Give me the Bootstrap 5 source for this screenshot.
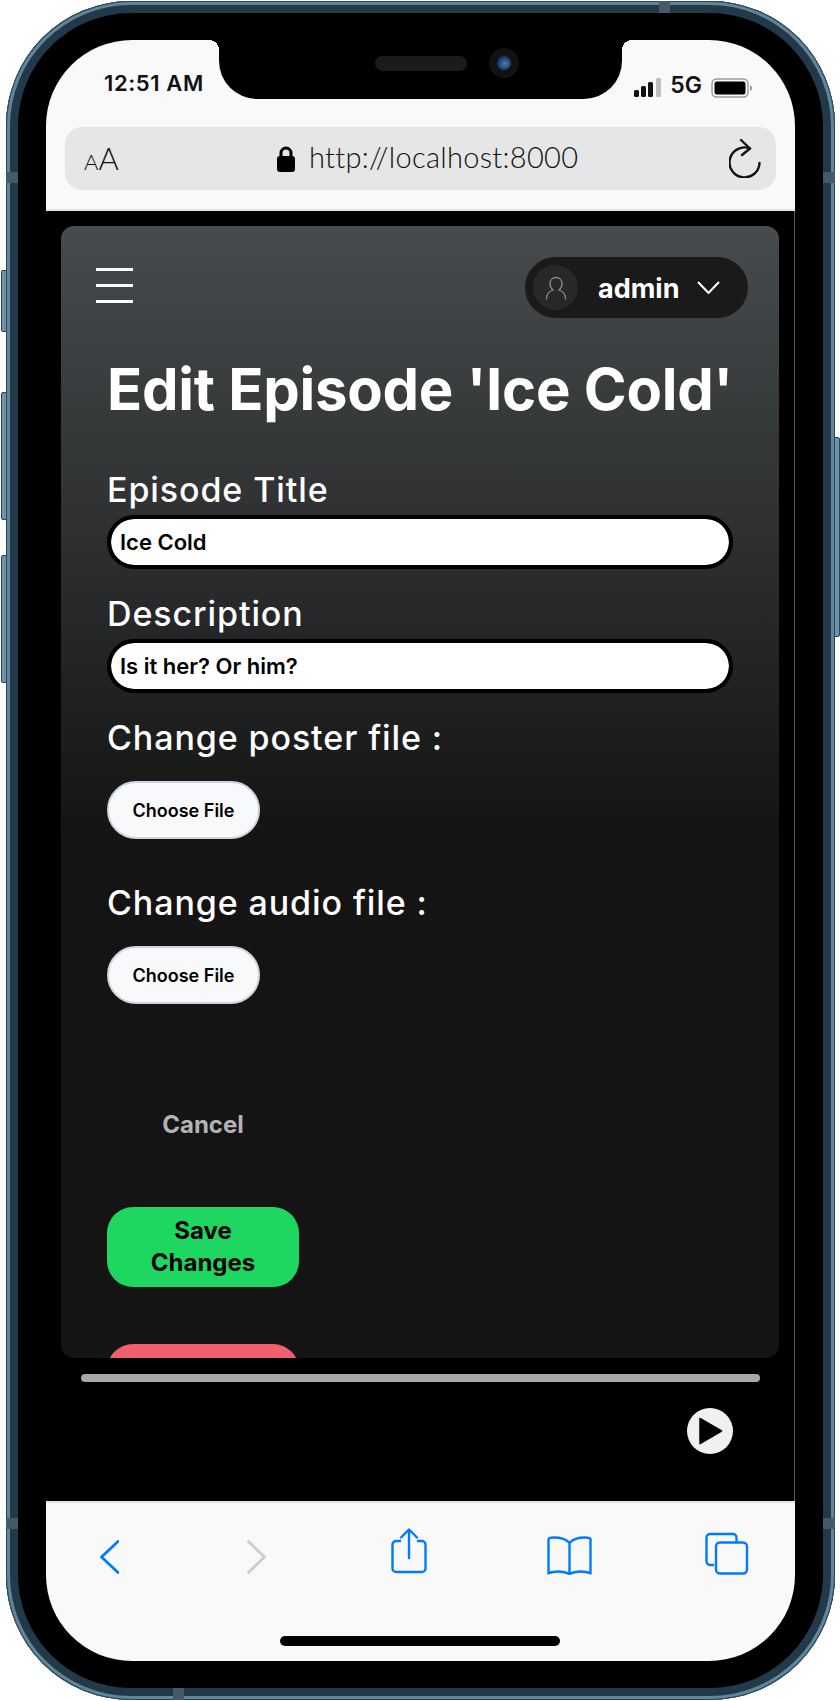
<!DOCTYPE html>
<html lang="en">
<head>
  <meta charset="UTF-8" />
  <meta name="viewport" content="width=device-width, initial-scale=1.0"/>
  <title>Edit Episode</title>
  <link href="https://cdn.jsdelivr.net/npm/bootstrap@5.3.0/dist/css/bootstrap.min.css" rel="stylesheet"/>
  <style>
    body { background: #fff; margin: 0; font-family: "Inter", "Liberation Sans", sans-serif; }
    .device { position: relative; width: 829px; height: 1699px; margin: 1px 0 0 6px; padding: 39px 40px; background: #000; border-radius: 125px;
      box-shadow: inset 0 0 0 1px #2c4557, inset 0 0 0 4px #628599, inset 0 0 0 12px #22394a; }
    .side-btn { position: absolute; width: 6px; background: #6f93aa; border: 1px solid #2c4557; }
    .side-left { left: -5px; border-radius: 2px 0 0 2px; }
    .side-right { right: -5px; border-radius: 0 2px 2px 0; }
    .band { position: absolute; background: #46596a; }
    .screen { position: relative; height: 1621px; border-radius: 86px; overflow: hidden; background: #000; }
    .safari-top { height: 171px; background: #f9f9f9; border-bottom: 2px solid #e6e6e6; padding: 0 19px; }
    .status-row { height: 87px; padding: 25px 23px 0 39px; }
    .clock { font-size: 22px; font-weight: 600; color: #111; line-height: 36px; letter-spacing: .6px; }
    .status-right { margin-top: 7px; }
    .signal-text { font-size: 23px; font-weight: 600; color: #111; line-height: 36px; margin: -5px 9px 0 8px; }
    .notch { position: absolute; top: 0; left: 173px; width: 403px; height: 59px; background: #000; border-radius: 0 0 38px 38px; }
    .notch::before, .notch::after { content: ""; position: absolute; top: 0; width: 10px; height: 10px; }
    .notch::before { left: -10px; background: radial-gradient(circle at 0 100%, transparent 10px, #000 10px); }
    .notch::after { right: -10px; background: radial-gradient(circle at 100% 100%, transparent 10px, #000 10px); }
    .speaker { position: absolute; left: 156px; top: 16px; width: 92px; height: 15px; border-radius: 8px; background: #1b1b1b; }
    .camera { position: absolute; left: 270px; top: 8px; width: 30px; height: 30px; border-radius: 50%; background: #121214; }
    .camera::after { content: ""; position: absolute; left: 8px; top: 8px; width: 14px; height: 14px; border-radius: 50%; background: radial-gradient(circle at 55% 55%, #3f7fb5, #1d2c5c 70%); }
    .url-bar { height: 63px; background: #e6e6e6; border-radius: 17px; padding: 0 15px 0 19px; color: #111; }
    .aa-text { font-family: "Lato", sans-serif; font-weight: 300; line-height: 1; width: 193px; }
    .aa-small { font-size: 22px; }
    .aa-big { font-size: 31px; }
    .url-text { font-family: "Lato", sans-serif; font-size: 29px; font-weight: 300; margin: -4px 0 0 14px; letter-spacing: .3px; }
    .page-area { height: 1290px; padding: 15px 15px 0; border-right: 1px solid #555; }
    .page-card { height: 1132px; overflow: hidden; border-radius: 13px; background: linear-gradient(#474b4d 0, #141414 610px); padding: 31px 46px 0; color: #fff; }
    .page-head { margin-right: -15px; margin-left: -11px; }
    .burger { width: 37px; margin-top: 11px; }
    .burger span { display: block; height: 3px; background: #fff; margin-bottom: 13px; }
    .user-pill { width: 223px; height: 61px; background: #1a1a1a; border-radius: 31px; padding: 0 8px; }
    .avatar { width: 45px; height: 45px; border-radius: 50%; background: #282828; }
    .user-name { font-size: 27px; font-weight: 700; margin: 4px 18px 0 20px; }
    .page-title { font-size: 58px; font-weight: 700; line-height: 70px; margin: 36px 0 46px; white-space: nowrap; letter-spacing: -.25px; }
    .field-label { display: block; font-size: 34px; font-weight: 500; line-height: 40px; margin: 0 0 5px; letter-spacing: .9px; }
    .field-input.form-control { height: 54px; border: 4px solid #000; border-radius: 27px; font-size: 22px; font-weight: 600; color: #000; padding: 0 9px; margin-bottom: 25px; box-shadow: none; }
    .file-label { display: block; font-size: 34px; font-weight: 500; line-height: 40px; margin-bottom: 23px; letter-spacing: .9px; }
    .file-btn.btn { display: block; width: 153px; height: 58px; background: #f7f9fb; border: 2px solid #cfd5de; border-radius: 29px; color: #000; font-size: 18px; font-weight: 600; padding: 0; margin-bottom: 44px; }
    .cancel-link { width: 192px; font-size: 24px; font-weight: 700; color: #b3b3b3; line-height: 30px; text-align: center; margin: 106px 0 67px; }
    .save-btn.btn { display: block; width: 192px; height: 80px; background: #1ed760; border: 0; border-radius: 26px; color: #000; font-size: 24px; font-weight: 700; line-height: 32px; padding: 0 30px; margin-bottom: 57px; }
    .delete-btn { width: 192px; height: 80px; background: #f15e6c; border-radius: 26px; }
    .player-row { padding: 16px 0 0; }
    .seek-bar { height: 8px; margin: 0 19px 0 20px; background: #a7a7a7; border-radius: 4px; }
    .play-btn { width: 46px; height: 46px; margin: 26px 46px 0 auto; border-radius: 50%; background: #f0f0f0; }
    .safari-bottom { height: 160px; background: #f9f9f9; border-top: 2px solid #e6e6e6; position: relative; }
    .tool-row { padding: 25px 0 0 54px; }
    .gap-a { margin-left: 128px; }
    .gap-b { margin-left: 125px; }
    .gap-c { margin-left: 120px; }
    .gap-d { margin-left: 113px; }
    .home-bar { position: absolute; left: 234px; bottom: 15px; width: 280px; height: 10px; border-radius: 5px; background: #000; }
  </style>
</head>
<body>
  <div class="device">
    <!-- hardware buttons and antenna bands -->
    <div class="side-btn side-left" style="top:269px;height:62px"></div>
    <div class="side-btn side-left" style="top:391px;height:128px"></div>
    <div class="side-btn side-left" style="top:554px;height:128px"></div>
    <div class="side-btn side-right" style="top:436px;height:200px"></div>
    <div class="band" style="left:0;top:171px;width:12px;height:11px"></div>
    <div class="band" style="right:0;top:171px;width:12px;height:11px"></div>
    <div class="band" style="left:0;top:1517px;width:12px;height:11px"></div>
    <div class="band" style="right:0;top:1517px;width:12px;height:11px"></div>
    <div class="band" style="left:653px;top:0;width:11px;height:12px"></div>
    <div class="band" style="left:167px;bottom:0;width:11px;height:12px"></div>

    <div class="screen d-flex flex-column">
      <div class="safari-top">
        <div class="status-row d-flex align-items-start">
          <span class="clock">12:51 AM</span>
          <div class="status-right ms-auto d-flex align-items-center">
            <svg width="28" height="19" viewBox="0 0 28 19">
              <rect x="0" y="12" width="5" height="7" rx="1.5" fill="#111"/>
              <rect x="7" y="8" width="5" height="11" rx="1.5" fill="#111"/>
              <rect x="14" y="4" width="5" height="15" rx="1.5" fill="#111"/>
              <rect x="22" y="0" width="5" height="19" rx="1.5" fill="#bdbdbd"/>
            </svg>
            <span class="signal-text">5G</span>
            <svg width="42" height="20" viewBox="0 0 42 20">
              <rect x="1" y="1" width="36" height="18" rx="4.5" fill="none" stroke="#9a9a9a" stroke-width="1.4"/>
              <rect x="3.5" y="3.5" width="31" height="13" rx="2.5" fill="#000"/>
              <path d="M39 7c1.5.5 2 1.5 2 3s-.5 2.500-2 3z" fill="#9a9a9a"/>
            </svg>
          </div>
        </div>
        <div class="url-bar d-flex align-items-center">
          <div class="aa-text"><span class="aa-small">A</span><span class="aa-big">A</span></div>
          <svg width="18" height="26" viewBox="0 0 18 26">
            <path d="M4 11V7a5 5 0 0 1 10 0v4" fill="none" stroke="#000" stroke-width="3"/>
            <rect x="0" y="10" width="18" height="16" rx="3" fill="#000"/>
          </svg>
          <span class="url-text">http://localhost:8000</span>
          <svg class="ms-auto" width="32" height="39" viewBox="0 0 32 39">
            <path d="M21 9.500A15 15 0 1 0 30.500 24" fill="none" stroke="#111" stroke-width="2.400" stroke-linecap="round"/>
            <path d="M12 1l9 8.500-8 6.500" fill="none" stroke="#111" stroke-width="2.400" stroke-linecap="round" stroke-linejoin="round"/>
          </svg>
        </div>
      </div>
      <div class="notch">
        <div class="speaker"></div>
        <div class="camera"></div>
      </div>

      <div class="page-area">
        <div class="page-card">
          <div class="page-head d-flex justify-content-between align-items-start">
            <div class="burger">
              <span></span><span></span><span class="mb-0"></span>
            </div>
            <div class="user-pill d-flex align-items-center">
              <div class="avatar d-flex align-items-center justify-content-center">
                <svg width="22" height="24" viewBox="0 0 22 24">
                  <path d="M1.500 23c0-5 3.500-8 6.500-9-2-1.500-3-3.500-3-6.500C5 4 7.500 1.500 11 1.500S17 4 17 7.500c0 3-1 5-3 6.500 3 1 6.500 4 6.500 9" fill="none" stroke="#8a8a8a" stroke-width="1.300" stroke-linecap="round"/>
                </svg>
              </div>
              <span class="user-name">admin</span>
              <svg width="23" height="13" viewBox="0 0 23 13">
                <path d="M1 1l10.500 11L22 1" fill="none" stroke="#fff" stroke-width="2"/>
              </svg>
            </div>
          </div>

          <h1 class="page-title">Edit Episode 'Ice Cold'</h1>
          <form>
            <label class="field-label" for="epTitle">Episode Title</label>
            <input class="form-control field-input" id="epTitle" type="text" value="Ice Cold"/>
            <label class="field-label" for="epDesc">Description</label>
            <input class="form-control field-input" id="epDesc" type="text" value="Is it her? Or him?"/>
            <span class="file-label">Change poster file :</span>
            <button type="button" class="btn file-btn">Choose File</button>
            <span class="file-label">Change audio file :</span>
            <button type="button" class="btn file-btn">Choose File</button>
            <div class="cancel-link">Cancel</div>
            <button type="button" class="btn save-btn">Save Changes</button>
            <div class="delete-btn"></div>
          </form>
        </div>
        <div class="player-row">
          <div class="seek-bar"></div>
          <div class="play-btn d-flex align-items-center justify-content-center">
            <svg width="26" height="28" viewBox="0 0 26 28">
              <path d="M3 1.500L24.500 14 3 26.500z" fill="#000" stroke="#000" stroke-width="1.500" stroke-linejoin="round"/>
            </svg>
          </div>
        </div>
      </div>

      <div class="safari-bottom">
        <div class="tool-row d-flex align-items-start">
          <svg style="margin-top:12px" width="19" height="34" viewBox="0 0 19 34">
            <path d="M18 1.500L1.500 17 18 32.500" fill="none" stroke="#007aff" stroke-width="2.800" stroke-linecap="round" stroke-linejoin="round"/>
          </svg>
          <svg class="gap-a" style="margin-top:12px" width="19" height="34" viewBox="0 0 19 34">
            <path d="M1.500 1.500L17.500 17 1.500 32.500" fill="none" stroke="#ccc" stroke-width="2.800" stroke-linecap="round" stroke-linejoin="round"/>
          </svg>
          <svg class="gap-b" width="36" height="46" viewBox="0 0 36 46">
            <path d="M10 13H5a3.500 3.500 0 0 0-3.500 3.500v24A3.500 3.500 0 0 0 5 44h26a3.500 3.500 0 0 0 3.500-3.500v-24A3.500 3.500 0 0 0 31 13h-5" fill="none" stroke="#007aff" stroke-width="2.400"/>
            <path d="M18 30V2M10 9.500L18 1.500l8 8" fill="none" stroke="#007aff" stroke-width="2.400" stroke-linecap="round" stroke-linejoin="round"/>
          </svg>
          <svg class="gap-c" style="margin-top:8px" width="45" height="39" viewBox="0 0 45 39">
            <path d="M22.500 7C19 3 14 1.500 7 1.500c-2.500 0-5 .5-5.500 1.500v34c6-2 15-2.500 21 1 6-3.500 15-3 21-1V3c-.5-1-3-1.500-5.500-1.500C31 1.500 26 3 22.500 7zM22.500 7v30" fill="none" stroke="#007aff" stroke-width="2.400"/>
          </svg>
          <svg class="gap-d" style="margin-top:4px" width="44" height="43" viewBox="0 0 44 43">
            <path d="M9 33H5a3.500 3.500 0 0 1-3.500-3.500v-24A3.500 3.500 0 0 1 5 2h23a3.500 3.500 0 0 1 3.500 3.500V10" fill="none" stroke="#007aff" stroke-width="2.400"/>
            <rect x="11" y="10.500" width="31" height="31" rx="4" fill="none" stroke="#007aff" stroke-width="2.400"/>
          </svg>
        </div>
        <div class="home-bar"></div>
      </div>
    </div>
  </div>
  <script src="https://cdn.jsdelivr.net/npm/bootstrap@5.3.0/dist/js/bootstrap.bundle.min.js"></script>
</body>
</html>
